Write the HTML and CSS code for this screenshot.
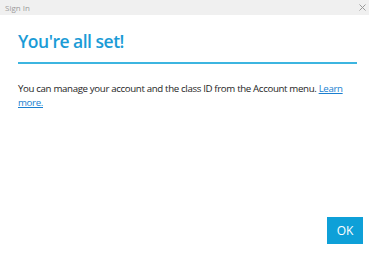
FILE: index.html
```html
<!DOCTYPE html>
<html lang="en">
	<head>
		<meta charset="UTF-8" />
		<meta name="viewport" content="width=device-width, initial-scale=1.0" />
		<title>Sign In</title>
		<link rel="stylesheet" href="styles.css">
	</head>
	<body>
		<div class="window">
			<div class="titlebar">
				<span class="title">Sign In</span>
				<svg class="close" width="7" height="7" viewBox="0 0 7 7">
					<path d="M0.5 0.5 L6.5 6.5 M6.5 0.5 L0.5 6.5" stroke="#9a9a9a" stroke-width="1" fill="none" />
				</svg>
			</div>
			<div class="content">
				<h1 class="heading">You're all set!</h1>
				<p class="message">You can manage your account and the class ID from the Account menu. <a href="#">Learn more.</a></p>
			</div>
			<div class="footer">
				<button class="ok">OK</button>
			</div>
		</div>
	</body>
</html>
```

FILE: styles.css
```css
body {
	margin: 0;
	font-family: "Open Sans", "Noto Sans", sans-serif;
	background: #ffffff;
}
.window {
	display: flex;
	flex-direction: column;
	width: 369px;
	height: 255px;
}
.titlebar {
	display: flex;
	justify-content: space-between;
	align-items: center;
	height: 15px;
	padding: 0 3px 0 5px;
	background-color: #f0f0f0;
}
.title {
	font-size: 8px;
	color: #9b9b9b;
}
.content {
	flex: 1;
	padding: 0 12px 0 18px;
}
.heading {
	margin: 13px 0 0;
	padding-bottom: 7px;
	border-bottom: 2px solid #3cb5e0;
	font-size: 17.5px;
	font-weight: 600;
	letter-spacing: -0.5px;
	color: #1a9bd6;
	line-height: 27px;
}
.message {
	margin: 18px 0 0;
	font-size: 9.7px;
	letter-spacing: -0.35px;
	line-height: 14px;
	color: #1e1e1e;
}
.message a {
	color: #1a7fd0;
}
.footer {
	display: flex;
	justify-content: flex-end;
	padding: 0 6px 11px 0;
}
.ok {
	width: 36px;
	height: 27px;
	border: none;
	background-color: #0ea0d8;
	color: #ffffff;
	font-family: inherit;
	font-size: 12px;
	padding: 0;
}
```
